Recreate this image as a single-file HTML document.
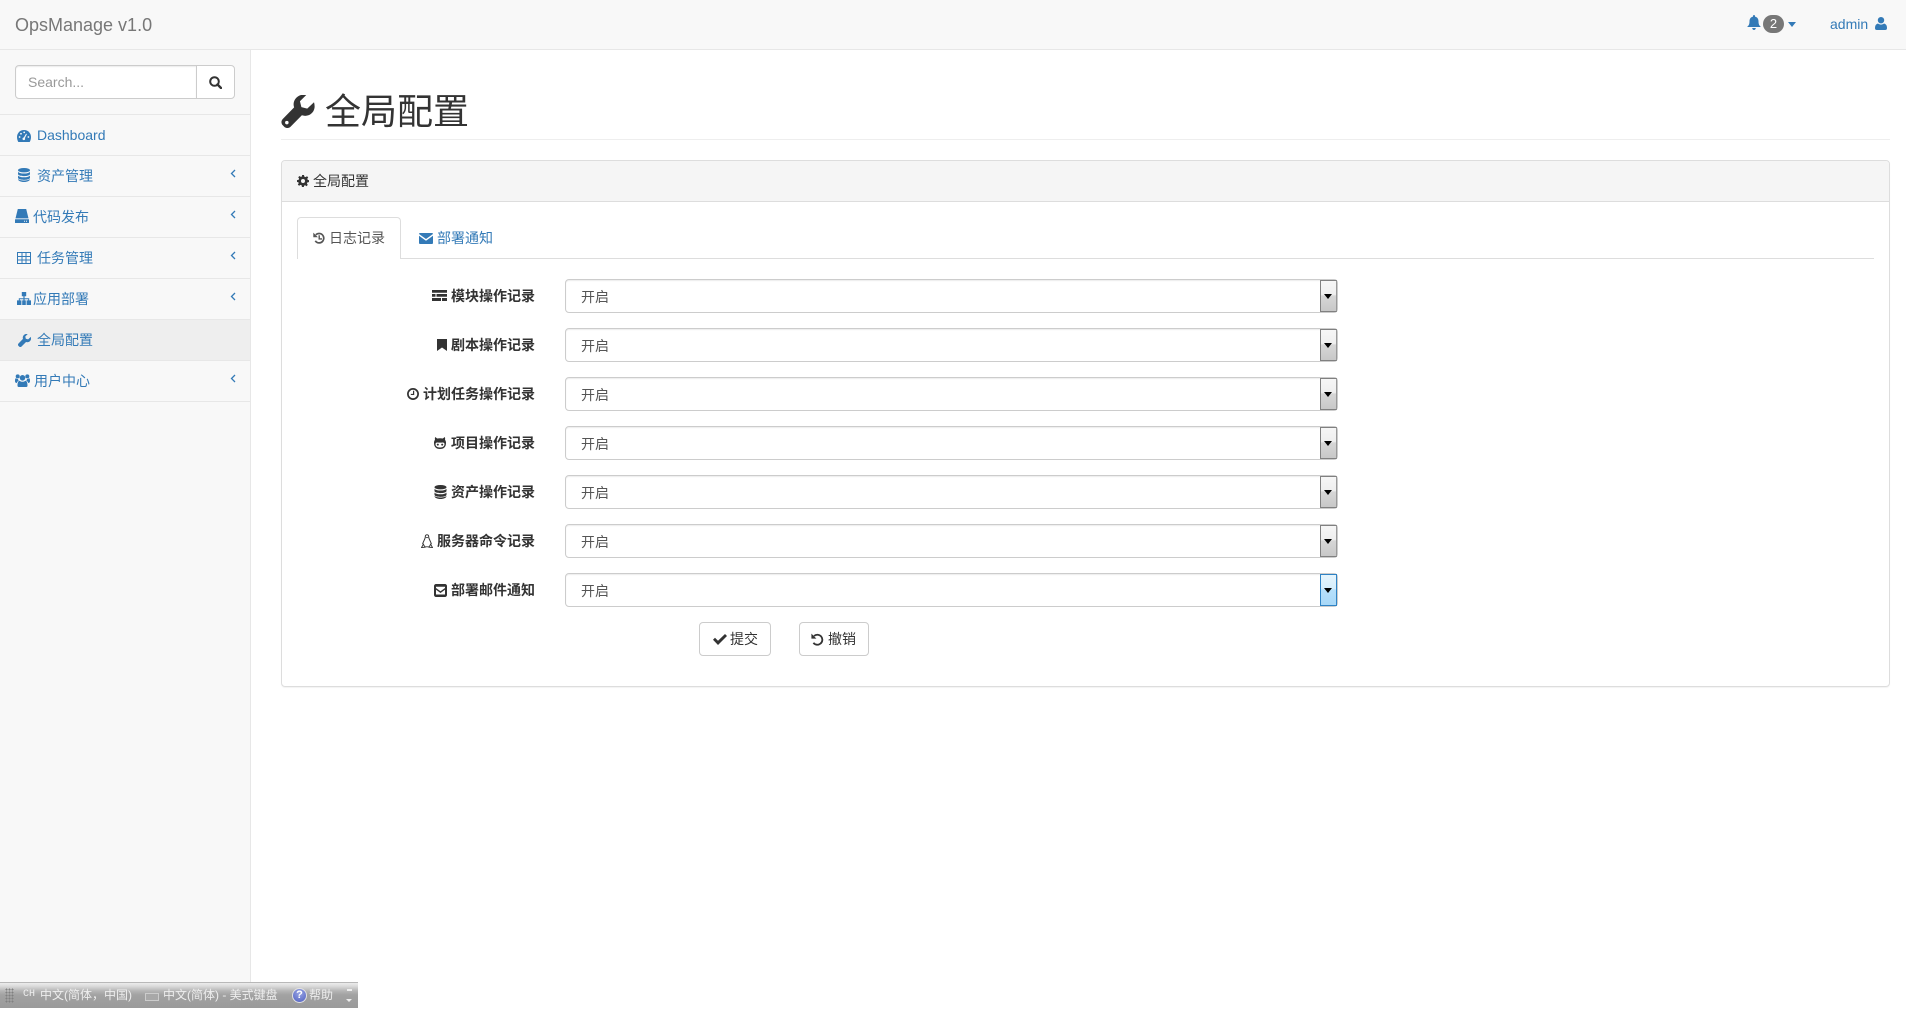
<!DOCTYPE html>
<html lang="zh-CN"><head><meta charset="utf-8"><title>OpsManage</title>
<style>
*{box-sizing:border-box}
html,body{margin:0;padding:0;width:1906px;height:1011px;overflow:hidden;background:#fff}
body{font:14px/20px "Liberation Sans","Noto Sans CJK SC",sans-serif;color:#333;position:relative}
.a{position:absolute}
.t{position:absolute;white-space:nowrap;line-height:20px}
.b{color:#337ab7}
svg{position:absolute;display:block;fill:currentColor}
.line{position:absolute;background:#e7e7e7}
.lb{font-weight:bold;right:1371px;color:#333}
.sel{position:absolute;left:565px;width:773px;height:34px;border:1px solid #ccc;border-radius:4px;background:#fff;box-shadow:inset 0 1px 1px rgba(0,0,0,.075);color:#555}
.sel span{position:absolute;left:15px;top:7px;line-height:20px}
.arr{position:absolute;right:0;top:0;width:17px;height:32px;border:1px solid #808080;border-right-color:#999;background:linear-gradient(#f6f6f6 0,#efefef 45%,#d6d6d6 50%,#c8c8c8 100%)}
.arr i{position:absolute;left:3px;top:13px;border:4px solid transparent;border-top:5px solid #000;border-bottom:0}
.arr.f{border-color:#2f83c5;background:linear-gradient(#e6f5fd 0,#d6eefc 45%,#b6e0fb 50%,#a8d8f8 100%)}
.btn{position:absolute;top:622px;height:34px;background:#fff;border:1px solid #ccc;border-radius:4px}
.ch{position:absolute;left:230px;width:6px;height:9px}
.sb{color:#eee;font-size:12px;line-height:14px;position:absolute;white-space:nowrap}
</style></head><body>

<!-- navbar -->
<div class="a" style="left:0;top:0;width:1906px;height:50px;background:#f8f8f8;border-bottom:1px solid #e7e7e7"></div>
<div class="t" style="left:15px;top:15px;font-size:18px;color:#777">OpsManage v1.0</div>
<svg class="b" style="left:1747px;top:15px;color:#337ab7" width="14" height="15" viewBox="0 0 14 15"><path d="M7 0c.6 0 1 .4 1 1v.6c2.300.4 3.500 2.400 3.500 4.600 0 3 .7 4.300 2.500 5.800H0c1.800-1.500 2.500-2.800 2.500-5.800C2.500 4 3.700 2 6 1.600V1c0-.6.400-1 1-1zM5.200 13h3.600c0 1.100-.8 2-1.800 2s-1.800-.9-1.800-2z"/></svg>
<div class="a" style="left:1763px;top:15px;width:21px;height:18px;border-radius:9px;background:#777;color:#fff;font-size:13px;line-height:18px;text-align:center">2</div>
<div class="a" style="left:1788px;top:22px;border:4px solid transparent;border-top:5px solid #337ab7;border-bottom:0"></div>
<div class="t b" style="left:1830px;top:14px">admin</div>
<svg style="left:1875px;top:17px;color:#337ab7" width="12" height="13" viewBox="0 0 12 13"><circle cx="6" cy="3.200" r="3.200"/><path d="M0 11.200C0 8.500 1 7 3 6.500c.8.700 1.900 1.100 3 1.100s2.200-.4 3-1.100c2 .5 3 2 3 4.700 0 1.100-.8 1.800-1.800 1.800H1.800C.8 13 0 12.300 0 11.200z"/></svg>

<!-- sidebar -->
<div class="a" style="left:0;top:50px;width:251px;height:961px;background:#f8f8f8;border-right:1px solid #e7e7e7"></div>
<div class="a" style="left:15px;top:65px;width:182px;height:34px;background:#fff;border:1px solid #ccc;border-radius:4px 0 0 4px;box-shadow:inset 0 1px 1px rgba(0,0,0,.075)"></div>
<div class="t" style="left:28px;top:72px;color:#999">Search...</div>
<div class="a" style="left:196px;top:65px;width:39px;height:34px;background:#fff;border:1px solid #ccc;border-radius:0 4px 4px 0"></div>
<svg style="left:209px;top:76px;color:#333" width="13" height="13" viewBox="0 0 13 13"><circle cx="5.500" cy="5.500" r="4.300" fill="none" stroke="currentColor" stroke-width="2"/><path d="M8.500 8.500l3.500 3.500" stroke="currentColor" stroke-width="2.400" stroke-linecap="round"/></svg>

<div class="line" style="left:0;top:114px;width:250px;height:1px"></div>
<div class="line" style="left:0;top:155px;width:250px;height:1px"></div>
<div class="line" style="left:0;top:196px;width:250px;height:1px"></div>
<div class="line" style="left:0;top:237px;width:250px;height:1px"></div>
<div class="line" style="left:0;top:278px;width:250px;height:1px"></div>
<div class="a" style="left:0;top:320px;width:250px;height:40px;background:#eee"></div>
<div class="line" style="left:0;top:319px;width:250px;height:1px"></div>
<div class="line" style="left:0;top:360px;width:250px;height:1px"></div>
<div class="line" style="left:0;top:401px;width:250px;height:1px"></div>

<svg style="left:17px;top:130px;color:#337ab7" width="14" height="12" viewBox="0 0 14 12"><path d="M7 0C3.100 0 0 3.100 0 7c0 1.800.5 3.500 1.300 5h11.400c.8-1.500 1.300-3.200 1.300-5 0-3.900-3.100-7-7-7z"/><g fill="#f8f8f8"><circle cx="2.600" cy="7" r=".9"/><circle cx="4" cy="3.800" r=".9"/><circle cx="7.200" cy="2.400" r=".9"/><circle cx="11.400" cy="7" r=".9"/><circle cx="6.800" cy="8.800" r="1.300"/><path d="M6.500 8l2.600-4.400.8.500-2.300 4.600z"/></g></svg>
<div class="t b" style="left:37px;top:125px">Dashboard</div>

<svg style="left:18px;top:168px;color:#337ab7" width="12" height="14" viewBox="0 0 12 14"><ellipse cx="6" cy="2.200" rx="6" ry="2.200"/><path d="M0 3.700C1 5 3.500 5.500 6 5.500S11 5 12 3.700V6c0 1.200-2.700 2.100-6 2.100S0 7.200 0 6zM0 7.500C1 8.800 3.500 9.300 6 9.300s5-.5 6-1.800V9.800C12 11 9.300 11.900 6 11.900S0 11 0 9.800zM0 11C1 12 3.500 12.500 6 12.500S11 12 12 11c0 1.800-2.700 3-6 3s-6-1.200-6-3z"/></svg>
<div class="t b" style="left:37px;top:166px">资产管理</div>
<svg class="ch" style="top:169px;color:#337ab7" viewBox="0 0 6 9"><path d="M5 1L1.500 4.500 5 8" fill="none" stroke="currentColor" stroke-width="1.300"/></svg>

<svg style="left:15px;top:209px;color:#337ab7" width="14" height="14" viewBox="0 0 14 14"><path d="M2.800 0h8.400l2.300 9.400H.5zM.3 10.300h13.400c.2 0 .3.100.3.300V14H0v-3.400c0-.2.100-.3.300-.3z"/><path d="M9 11.800h1v1H9zM11 11.800h1v1h-1z" fill="#f8f8f8"/></svg>
<div class="t b" style="left:33px;top:207px">代码发布</div>
<svg class="ch" style="top:210px;color:#337ab7" viewBox="0 0 6 9"><path d="M5 1L1.500 4.500 5 8" fill="none" stroke="currentColor" stroke-width="1.300"/></svg>

<svg style="left:17px;top:252px;color:#337ab7" width="14" height="12" viewBox="0 0 14 12"><path fill-rule="evenodd" d="M0 0h14v12H0zM1 1v3h3.500V1zm4.500 0v3h3V1zm4 0v3H13V1zM1 5v2.500h3.500V5zm4.500 0v2.500h3V5zm4 0v2.500H13V5zM1 8.500V11h3.500V8.500zm4.500 0V11h3V8.500zm4 0V11H13V8.500z"/></svg>
<div class="t b" style="left:37px;top:248px">任务管理</div>
<svg class="ch" style="top:251px;color:#337ab7" viewBox="0 0 6 9"><path d="M5 1L1.500 4.500 5 8" fill="none" stroke="currentColor" stroke-width="1.300"/></svg>

<svg style="left:17px;top:292px;color:#337ab7" width="14" height="13" viewBox="0 0 14 13"><path d="M4.800 0h4.400v4.200H7.600v2h4.600v2.200H14V13H9.600V8.400h1.600V7.200H7.600v1.200h1.200V13H5.200V8.400h1.200V7.200H2.800v1.200h1.600V13H0V8.400h1.800V6.200h4.600v-2H4.800z"/></svg>
<div class="t b" style="left:33px;top:289px">应用部署</div>
<svg class="ch" style="top:292px;color:#337ab7" viewBox="0 0 6 9"><path d="M5 1L1.500 4.500 5 8" fill="none" stroke="currentColor" stroke-width="1.300"/></svg>

<svg style="left:18px;top:334px;color:#337ab7" width="13" height="13" viewBox="0 0 34 34"><path d="M33.500 7.500L26.500 14l-6-1.500L19 6.500 25.500 0C20 -1.500 14 2 12.700 7.500c-.4 2-.3 3.500.3 5.300L1.300 24.700c-1.800 1.800-1.800 4.700 0 6.500l1.500 1.500c1.800 1.800 4.700 1.800 6.500 0L21 20.900c6 2 12-1.500 13-7.500.3-2 0-4-.5-5.900z"/></svg>
<div class="t b" style="left:37px;top:330px">全局配置</div>

<svg style="left:15px;top:374px;color:#337ab7" width="15" height="13" viewBox="0 0 15 13"><circle cx="7.500" cy="3.800" r="2.800"/><circle cx="2.700" cy="2.400" r="2"/><circle cx="12.300" cy="2.400" r="2"/><path d="M3.700 13c-.8 0-1.200-.5-1.200-1.200C2.500 9 3 7 4.700 6.800c.7.700 1.700 1 2.800 1s2.100-.3 2.800-1c1.700.2 2.200 2.200 2.200 5 0 .7-.4 1.200-1.200 1.200zM0 6.500c0-1.200.3-2.200 1-2.200.6.500 1.300.8 2.100.7-.1 1 .3 1.400.8 1.500C2.900 7 2.100 8 1.800 9 .7 9 0 8.300 0 7.300zM15 6.500c0-1.200-.3-2.200-1-2.200-.6.500-1.300.8-2.100.7.100 1-.3 1.400-.8 1.500 1 .5 1.800 1.500 2.100 2.500 1.100 0 1.800-.7 1.800-1.700z"/></svg>
<div class="t b" style="left:34px;top:371px">用户中心</div>
<svg class="ch" style="top:374px;color:#337ab7" viewBox="0 0 6 9"><path d="M5 1L1.500 4.500 5 8" fill="none" stroke="currentColor" stroke-width="1.300"/></svg>

<!-- header -->
<svg style="left:281px;top:95px;color:#333" width="34" height="33" viewBox="0 0 34 34"><path d="M33.500 7.500L26.500 14l-6-1.500L19 6.500 25.500 0C20 -1.500 14 2 12.700 7.500c-.4 2-.3 3.500.3 5.300L1.300 24.700c-1.800 1.800-1.800 4.700 0 6.500l1.500 1.500c1.800 1.800 4.700 1.800 6.500 0L21 20.900c6 2 12-1.500 13-7.500.3-2 0-4-.5-5.900z"/><circle cx="5.500" cy="28.500" r="1.800" fill="#fff"/></svg>
<div class="t" style="left:325px;top:92px;font-size:36px;line-height:40px;color:#333">全局配置</div>
<div class="line" style="left:281px;top:139px;width:1609px;height:1px;background:#eee"></div>

<!-- panel -->
<div class="a" style="left:281px;top:160px;width:1609px;height:527px;border:1px solid #ddd;border-radius:4px;box-shadow:0 1px 1px rgba(0,0,0,.05)"></div>
<div class="a" style="left:282px;top:161px;width:1607px;height:41px;background:#f5f5f5;border-bottom:1px solid #ddd;border-radius:3px 3px 0 0"></div>
<svg style="left:297px;top:175px;color:#333" width="12" height="12" viewBox="-6 -6 12 12"><g><path fill-rule="evenodd" d="M-1-6h2l.3 1.600 1.300.5L4-4.800 5.200-3.600 4.300-2.300l.5 1.300L6-.9v2l-1.600.3-.5 1.200.9 1.300-1.300 1.300-1.300-.9-1.200.5L.9 6h-2l-.2-1.600-1.300-.5-1.300.9-1.300-1.200.9-1.300-.5-1.300L-6 1.100v-2l1.700-.3.4-1.200-.9-1.300 1.300-1.300 1.300.9 1.300-.5zM0-2a2 2 0 100 4 2 2 0 000-4z"/></g></svg>
<div class="t" style="left:313px;top:171px">全局配置</div>

<!-- tabs -->
<div class="line" style="left:297px;top:258px;width:1577px;height:1px;background:#ddd"></div>
<div class="a" style="left:297px;top:217px;width:104px;height:42px;background:#fff;border:1px solid #ddd;border-bottom:0;border-radius:4px 4px 0 0"></div>
<svg style="left:313px;top:232px;color:#555" width="12" height="12" viewBox="0 0 12 12"><path d="M2.800 2.800A4.700 4.700 0 116.200 10.900 4.700 4.700 0 012.300 8.800" fill="none" stroke="currentColor" stroke-width="1.700"/><path d="M.3 .6v4.600h4.600zM5.500 3.300h1.400v3H9v1.300H5.500z"/></svg>
<div class="t" style="left:329px;top:228px;color:#555">日志记录</div>
<svg style="left:419px;top:233px;color:#337ab7" width="14" height="11" viewBox="0 0 14 11"><path d="M1 0h12c.5 0 1 .4 1 1L7 6 0 1c0-.6.500-1 1-1zM0 2.800l7 5 7-5V10c0 .6-.5 1-1 1H1c-.5 0-1-.4-1-1z"/></svg>
<div class="t b" style="left:437px;top:228px">部署通知</div>

<!-- rows -->
<svg style="left:432px;top:290px;color:#333" width="15" height="11" viewBox="0 0 15 11"><path d="M0 0h15v2.800H0zM4.500 4H15v2.800H4.500zM0 4h3.500v2.800H0zM0 8h9v3H0zM10 8h5v3h-5z"/></svg>
<div class="t lb" style="top:286px">模块操作记录</div>
<div class="sel" style="top:279px"><span>开启</span><div class="arr"><i></i></div></div>

<svg style="left:437px;top:339px;color:#333" width="10" height="12" viewBox="0 0 10 12"><path d="M0 0h10v12L5 8.500 0 12z"/></svg>
<div class="t lb" style="top:335px">剧本操作记录</div>
<div class="sel" style="top:328px"><span>开启</span><div class="arr"><i></i></div></div>

<svg style="left:407px;top:388px;color:#333" width="12" height="12" viewBox="0 0 12 12"><circle cx="6" cy="6" r="5.100" fill="none" stroke="currentColor" stroke-width="1.700"/><path d="M6 2.800h1.200V7H3.800V5.900H6z"/></svg>
<div class="t lb" style="top:384px">计划任务操作记录</div>
<div class="sel" style="top:377px"><span>开启</span><div class="arr"><i></i></div></div>

<svg style="left:434px;top:437px;color:#333" width="12" height="12" viewBox="0 0 12 12"><path d="M1.200 0l2 1.500C4 1.300 5 1.200 6 1.200s2 .1 2.800.3l2-1.500c.4 1 .4 2 .2 2.800.6.800 1 1.800 1 3C12 10 10 12 6 12S0 10 0 5.800c0-1.200.4-2.200 1-3-.2-.8-.2-1.800.2-2.800z"/><path d="M1.500 7c0-1.200 1-1.600 2-1.500 1.700.2 3.300.2 5 0 1-.1 2 .3 2 1.500 0 2-1.200 3.500-4.500 3.500S1.500 9 1.500 7z" fill="#fff"/><circle cx="3.800" cy="7.600" r="1"/><circle cx="8.200" cy="7.600" r="1"/></svg>
<div class="t lb" style="top:433px">项目操作记录</div>
<div class="sel" style="top:426px"><span>开启</span><div class="arr"><i></i></div></div>

<svg style="left:434px;top:485px;color:#333" width="13" height="14" viewBox="0 0 12 14"><ellipse cx="6" cy="2.200" rx="6" ry="2.200"/><path d="M0 3.700C1 5 3.500 5.500 6 5.500S11 5 12 3.700V6c0 1.200-2.700 2.100-6 2.100S0 7.200 0 6zM0 7.500C1 8.800 3.500 9.300 6 9.300s5-.5 6-1.800V9.800C12 11 9.300 11.900 6 11.900S0 11 0 9.800zM0 11C1 12 3.500 12.500 6 12.500S11 12 12 11c0 1.800-2.700 3-6 3s-6-1.200-6-3z"/></svg>
<div class="t lb" style="top:482px">资产操作记录</div>
<div class="sel" style="top:475px"><span>开启</span><div class="arr"><i></i></div></div>

<svg style="left:421px;top:534px;color:#333" width="12" height="14" viewBox="0 0 12 14"><path d="M6 .7C4.700.7 4.200 1.800 4.300 3c.1 1.500-2.300 5-2.700 7.200" fill="none" stroke="currentColor" stroke-width="1"/><path d="M6 .7c1.300 0 1.800 1.100 1.700 2.300-.1 1.500 2.300 5 2.700 7.200" fill="none" stroke="currentColor" stroke-width="1"/><path d="M4.500 3h3l-1.500 1.200z"/><path d="M.5 13.500l3.500-.3-1.600-3zM11.500 13.500l-3.500-.3 1.600-3zM4 12.800h4" fill="none" stroke="currentColor" stroke-width=".9"/></svg>
<div class="t lb" style="top:531px">服务器命令记录</div>
<div class="sel" style="top:524px"><span>开启</span><div class="arr"><i></i></div></div>

<svg style="left:434px;top:584px;color:#333" width="13" height="13" viewBox="0 0 13 13"><path fill-rule="evenodd" d="M2 0h9c1.100 0 2 .9 2 2v9c0 1.100-.9 2-2 2H2c-1.100 0-2-.9-2-2V2C0 .9.900 0 2 0zM2 4l4.500 3.200L11 4V2.800H2zM2 5.800V10.500h9V5.800L6.500 9z"/></svg>
<div class="t lb" style="top:580px">部署邮件通知</div>
<div class="sel" style="top:573px"><span>开启</span><div class="arr f"><i></i></div></div>

<!-- buttons -->
<div class="btn" style="left:699px;width:72px"></div>
<svg style="left:713px;top:634px;color:#333" width="14" height="11" viewBox="0 0 14 11"><path d="M0 5.800l2-2 3 3L12 0l2 2-9 9z"/></svg>
<div class="t" style="left:730px;top:629px">提交</div>
<div class="btn" style="left:799px;width:70px"></div>
<svg style="left:811px;top:633px;color:#333" width="13" height="13" viewBox="0 0 13 13"><path d="M3 3a5 5 0 11-.6 6.800" fill="none" stroke="currentColor" stroke-width="1.800"/><path d="M.4 .6v5h5z"/></svg>
<div class="t" style="left:828px;top:629px">撤销</div>

<!-- language bar -->
<div class="a" style="left:0;top:1008px;width:358px;height:3px;background:#fff"></div>
<div class="a" style="left:0;top:982px;width:358px;height:26px;background:linear-gradient(#b8b8b8 0,#b8b8b8 1px,#ececec 1px,#dcdcdc 4px,#b4b4b4 9px,#a2a2a2 13px,#9a9a9a 26px)"></div>
<div class="a" style="left:5px;top:988px;width:9px;height:15px;background:radial-gradient(circle,#808080 0,#808080 1px,transparent 1px) 0 0/3px 3px"></div>
<div class="sb" style="left:23px;top:988px;font:10px/14px 'Liberation Mono',monospace">CH</div>
<div class="sb" style="left:40px;top:988px">中文(简体，中国)</div>
<div class="a" style="left:145px;top:993px;width:14px;height:8px;border:1px solid #ccc;background:#a8a8a8"></div>
<div class="sb" style="left:163px;top:988px">中文(简体) - 美式键盘</div>
<div class="a" style="left:292px;top:988px;width:15px;height:15px;border-radius:8px;background:radial-gradient(circle at 50% 30%,#9aa6e4,#4f5fc0);border:1px solid #e2e2e2;color:#fff;font-size:11px;line-height:13px;text-align:center;font-weight:bold">?</div>
<div class="sb" style="left:309px;top:988px">帮助</div>
<div class="a" style="left:347px;top:989px;width:5px;height:2px;background:#eee"></div>
<div class="a" style="left:346px;top:999px;border:3px solid transparent;border-top:3px solid #eee;border-bottom:0"></div>
</body></html>
